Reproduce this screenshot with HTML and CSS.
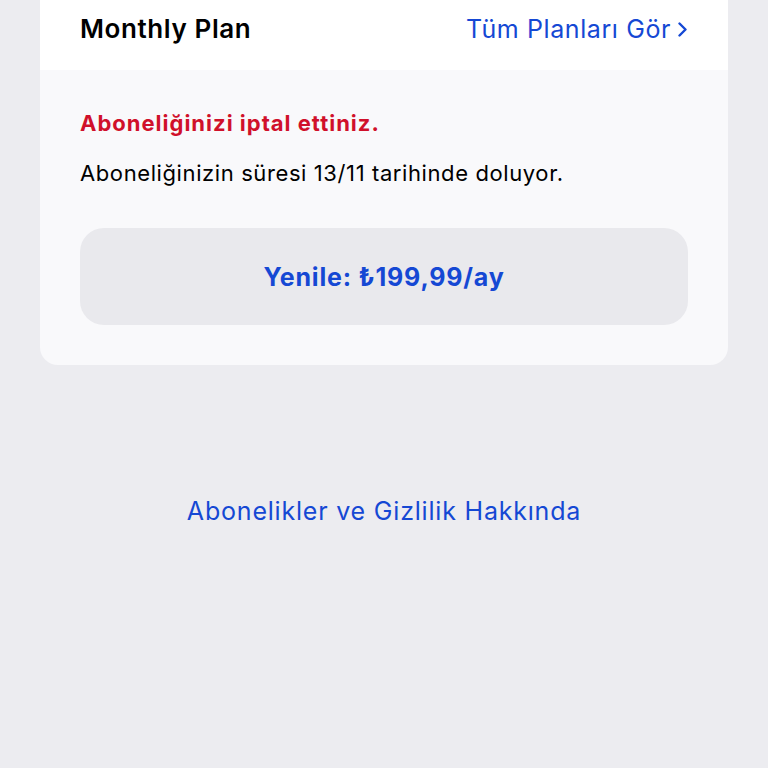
FILE: index.html
```html
<!DOCTYPE html>
<html lang="tr">
<head>
<meta charset="utf-8">
<link rel="stylesheet" href="styles.css">
</head>
<body>
<main class="page">
  <section class="card">
    <header class="card-head">
      <h1 class="plan-name">Monthly Plan</h1>
      <a class="all-plans" href="#">Tüm Planları Gör
        <svg class="chev" width="11" height="15" viewBox="0 0 11 15"><path d="M2.5 1.5 L8.5 7.5 L2.5 13.5" fill="none" stroke="currentColor" stroke-width="2.4" stroke-linecap="round" stroke-linejoin="round"/></svg>
      </a>
    </header>
    <div class="card-body">
      <p class="cancelled">Aboneliğinizi iptal ettiniz.</p>
      <p class="expires">Aboneliğinizin süresi 13/11 tarihinde doluyor.</p>
      <button class="renew">Yenile: ₺199,99/ay</button>
    </div>
  </section>
  <a class="privacy" href="#">Abonelikler ve Gizlilik Hakkında</a>
</main>
</body>
</html>
```
FILE: styles.css
```css
html, body {
  margin: 0;
  padding: 0;
}
body {
  background: #ececf0;
  font-family: Inter, "Open Sans", "Liberation Sans", sans-serif;
  width: 768px;
  height: 768px;
  overflow: hidden;
}
.page {
  display: flex;
  flex-direction: column;
}
.card {
  margin: 0 40px;
  background: #f9f9fb;
  border-radius: 0 0 18px 18px;
  overflow: hidden;
}
.card-head {
  height: 70px;
  box-sizing: border-box;
  background: #ffffff;
  display: flex;
  align-items: center;
  justify-content: space-between;
  padding: 0 40px 13px 40px;
}
.plan-name {
  margin: 0;
  font-size: 26px;
  line-height: 30px;
  font-weight: 600;
  color: #000;
  letter-spacing: 0.6px;
}
.all-plans {
  color: #1548d4;
  text-decoration: none;
  font-size: 25px;
  line-height: 30px;
  display: flex;
  align-items: center;
  gap: 6px;
  letter-spacing: 0.6px;
}
.chev {
  display: block;
  margin-top: 1px;
}
.card-body {
  padding: 38px 40px 40px;
}
.cancelled {
  margin: 0;
  color: #d0102a;
  font-size: 22px;
  font-weight: 700;
  line-height: 30px;
  letter-spacing: 1px;
}
.expires {
  margin: 20px 0 0;
  color: #000;
  font-size: 22px;
  line-height: 30px;
  letter-spacing: 0.6px;
}
.renew {
  display: block;
  width: 100%;
  margin-top: 40px;
  height: 97px;
  border: none;
  border-radius: 24px;
  background: #e9e9ed;
  color: #1548d4;
  font-family: inherit;
  font-size: 25px;
  font-weight: 700;
  letter-spacing: 0.8px;
}
.privacy {
  margin-top: 131px;
  align-self: center;
  color: #1548d4;
  text-decoration: none;
  font-size: 25px;
  line-height: 30px;
  letter-spacing: 0.8px;
}
```
